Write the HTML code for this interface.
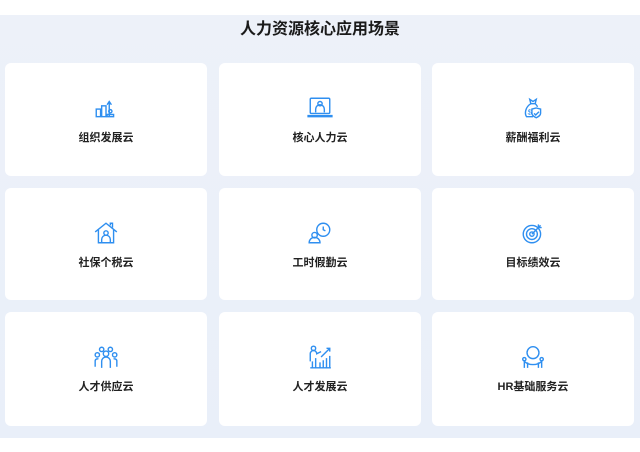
<!DOCTYPE html>
<html><head><meta charset="utf-8"><style>
*{margin:0;padding:0;box-sizing:border-box}
body{width:640px;height:452px;background:#fff;font-family:"Liberation Sans","Noto Sans CJK SC",sans-serif;position:relative;overflow:hidden}
.band{position:absolute;left:0;top:15px;width:640px;height:423px;background:linear-gradient(180deg,#edf1f9,#e9eff9)}
h1{position:absolute;top:19px;left:0;width:640px;text-align:center;font-size:16px;line-height:22px;font-weight:bold;color:#1a1a1a}
.c{position:absolute;width:202px;background:#fff;border-radius:6px}
.c svg{position:absolute;left:88px;top:32px;width:26px;height:26px}
.c span{position:absolute;left:0;width:100%;top:66px;text-align:center;font-size:11px;font-weight:bold;color:#222}
</style></head><body>
<div class="band"></div>
<h1>人力资源核心应用场景</h1>

<div class="c" style="left:5px;top:63px;height:113px"><svg viewBox="0 0 24 24" fill="none" stroke="#2f8ff0" stroke-width="1.3"><rect x="3" y="13" width="4" height="7"/><rect x="8" y="10" width="4" height="10"/><path d="M15 20v-13M13 9l2-3 2 3"/><circle cx="16" cy="15" r="1.5"/><path d="M13 20h6v-2h-6z"/></svg><span>组织发展云</span></div>
<div class="c" style="left:219px;top:63px;height:113px"><svg viewBox="0 0 24 24" fill="none" stroke="#2f8ff0" stroke-width="1.3"><rect x="3" y="3" width="18" height="14" rx="1"/><path d="M1 19h22v1H1z"/><circle cx="12" cy="8" r="2"/><path d="M8 16v-3a4 4 0 0 1 8 0v3"/></svg><span>核心人力云</span></div>
<div class="c" style="left:432px;top:63px;height:113px"><svg viewBox="0 0 24 24" fill="none" stroke="#2f8ff0" stroke-width="1.3"><path d="M9 4l3 2 3-2-1 4h-4z"/><path d="M10 8c-5 3-6 9-4 12h6"/><path d="M14 8c1 1 2 2 2 3"/><text x="7" y="18" font-size="7" fill="#2f8ff0" stroke="none">$</text><path d="M15 12l4 1v4c0 2-2 3-4 4-2-1-4-2-4-4v-4z"/><path d="M13 17l1.5 1.5 3-3"/></svg><span>薪酬福利云</span></div>

<div class="c" style="left:5px;top:188px;height:112px"><svg viewBox="0 0 24 24" fill="none" stroke="#2f8ff0" stroke-width="1.3"><path d="M2 11L12 3l10 8"/><path d="M5 9v12h14V9"/><path d="M16 5V3h2v4"/><circle cx="12" cy="12" r="2"/><path d="M8 21v-3a4 4 0 0 1 8 0v3"/></svg><span>社保个税云</span></div>
<div class="c" style="left:219px;top:188px;height:112px"><svg viewBox="0 0 24 24" fill="none" stroke="#2f8ff0" stroke-width="1.3"><circle cx="15" cy="9" r="6"/><path d="M15 6v3l2 1"/><circle cx="7" cy="14" r="2.5"/><path d="M2 21a5 5 0 0 1 10 0z"/></svg><span>工时假勤云</span></div>
<div class="c" style="left:432px;top:188px;height:112px"><svg viewBox="0 0 24 24" fill="none" stroke="#2f8ff0" stroke-width="1.3"><circle cx="11" cy="13" r="8"/><circle cx="11" cy="13" r="5"/><circle cx="11" cy="13" r="2"/><path d="M11 13L19 5M17 4v3h3"/></svg><span>目标绩效云</span></div>

<div class="c" style="left:5px;top:312px;height:114px"><svg viewBox="0 0 24 24" fill="none" stroke="#2f8ff0" stroke-width="1.3"><circle cx="8" cy="5" r="2"/><circle cx="16" cy="5" r="2"/><circle cx="4" cy="10" r="2"/><circle cx="20" cy="10" r="2"/><circle cx="12" cy="9" r="2.5"/><path d="M8 22v-6a4 4 0 0 1 8 0v6M2 21v-5a2 2 0 0 1 3-2M22 21v-5a2 2 0 0 0-3-2"/></svg><span>人才供应云</span></div>
<div class="c" style="left:219px;top:312px;height:114px"><svg viewBox="0 0 24 24" fill="none" stroke="#2f8ff0" stroke-width="1.3"><circle cx="6" cy="4" r="2"/><path d="M3 16V9a3 3 0 0 1 6 0l4-2"/><path d="M3 22h19M5 22v-6M8 22v-9M12 22v-5M15 22v-7M18 22v-9M21 22v-11M13 12l8-8M18 4h3v3"/></svg><span>人才发展云</span></div>
<div class="c" style="left:432px;top:312px;height:114px"><svg viewBox="0 0 24 24" fill="none" stroke="#2f8ff0" stroke-width="1.3"><circle cx="12" cy="8" r="5.5"/><circle cx="4" cy="14" r="1.5"/><circle cx="20" cy="14" r="1.5"/><path d="M4 22v-6c2 2 4 3 8 3s6-1 8-3v6M7 17v5M17 17v5"/></svg><span>HR基础服务云</span></div>
</body></html>
